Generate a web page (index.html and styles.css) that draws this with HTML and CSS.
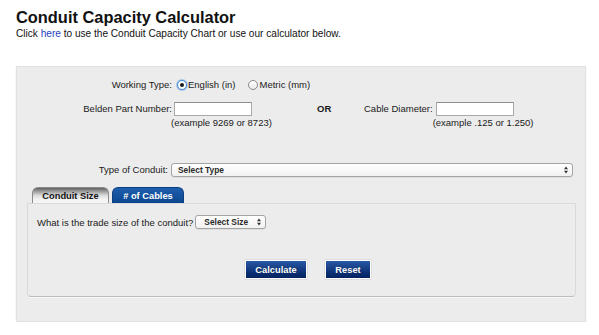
FILE: index.html
```html
<!DOCTYPE html>
<html lang="en">
<head>
<meta charset="utf-8">
<title>Conduit Capacity Calculator</title>
<link rel="stylesheet" href="styles.css">
</head>
<body>
<h1 class="title">Conduit Capacity Calculator</h1>
<p class="intro">Click <a href="#" class="link">here</a> to use the Conduit Capacity Chart or use our calculator below.</p>
<div class="panel">
  <div class="row row-type">
    <span class="lbl">Working Type:</span>
    <label class="radio-opt"><input type="radio" name="wt" class="radio" checked>English (in)</label>
    <label class="radio-opt radio-opt-2"><input type="radio" name="wt" class="radio">Metric (mm)</label>
  </div>
  <div class="row row-parts">
    <span class="lbl">Belden Part Number:</span>
    <div class="field">
      <input type="text" class="text-in">
      <span class="example">(example 9269 or 8723)</span>
    </div>
    <span class="or">OR</span>
    <span class="lbl2">Cable Diameter:</span>
    <div class="field field-2">
      <input type="text" class="text-in">
      <span class="example">(example .125 or 1.250)</span>
    </div>
  </div>
  <div class="row row-conduit">
    <span class="lbl lbl-conduit">Type of Conduit:</span>
    <div class="select select-wide"><span class="select-text">Select Type</span><svg class="arrows" width="4" height="8" viewBox="0 0 4 8"><path d="M0 3.3 L2 0.5 L4 3.3 Z M0 4.7 L2 7.5 L4 4.7 Z" fill="#333"/></svg></div>
  </div>
  <div class="tabs-wrap">
    <div class="tabs">
      <div class="tab tab-active">Conduit Size</div>
      <div class="tab tab-blue"># of Cables</div>
    </div>
    <div class="tab-panel">
      <div class="trade-row">
        <span class="trade-text">What is the trade size of the conduit?</span>
        <div class="select select-size"><span class="select-text">Select Size</span><svg class="arrows" width="4" height="8" viewBox="0 0 4 8"><path d="M0 3.3 L2 0.5 L4 3.3 Z M0 4.7 L2 7.5 L4 4.7 Z" fill="#333"/></svg></div>
      </div>
      <div class="buttons">
        <button class="btn btn-calc" type="button">Calculate</button>
        <button class="btn btn-reset" type="button">Reset</button>
      </div>
    </div>
  </div>
</div>
</body>
</html>
```
FILE: styles.css
```css
* { box-sizing: border-box; }
body {
  margin: 0;
  background: #fff;
  font-family: "Liberation Sans", Arial, sans-serif;
  color: #1a1a1a;
  font-size: 9.5px;
}
.title {
  margin: 8px 0 0 16px;
  font-size: 16.4px;
  line-height: 19px;
  font-weight: bold;
  color: #111;
}
.intro {
  margin: 1px 0 0 16px;
  font-size: 10.1px;
  line-height: 12px;
  color: #111;
}
.link { color: #1d3fc0; text-decoration: none; }

.panel {
  margin: 26px 0 0 16px;
  width: 570px;
  height: 256px;
  background: #ececec;
  border: 1px solid #e1e1e1;
  box-shadow: 0 1px 1px rgba(0,0,0,0.14);
  padding-top: 11px;
}
.row { display: flex; }
.lbl {
  width: 155px;
  text-align: right;
  line-height: 14px;
  flex: none;
}
.row-type { height: 14px; align-items: center; }
.radio-opt {
  display: flex;
  align-items: center;
  line-height: 14px;
}
.radio {
  appearance: none;
  -webkit-appearance: none;
  margin: 0 1px 0 5px;
  width: 10px;
  height: 10px;
  border-radius: 50%;
  border: 1px solid #8a8a8a;
  background: linear-gradient(#fff, #e9e9e9);
  display: grid;
  place-items: center;
}
.radio:checked {
  border-color: #3f86d6;
  box-shadow: 0 0 0 1px rgba(90,150,220,0.45);
  background: #fff;
}
.radio:checked::after {
  content: "";
  width: 4px;
  height: 4px;
  border-radius: 50%;
  background: #1a1a1a;
}
.radio-opt-2 .radio { margin-left: 12px; margin-right: 2px; }

.row-parts { margin-top: 10px; align-items: flex-start; }
.field {
  width: 143px;
  margin-left: 2px;
  display: flex;
  flex-direction: column;
  flex: none;
}
.field-2 { margin-left: 3px; width: 120px; }
.text-in {
  width: 78px;
  height: 14px;
  margin: 0;
  padding: 0;
  border: 1px solid #a9a9a9;
  border-top-color: #8f8f8f;
  background: #fff;
}
.example {
  margin: 1px 0 0 -3px;
  line-height: 12px;
  white-space: nowrap;
}
.or {
  width: 47px;
  font-weight: bold;
  line-height: 14px;
  flex: none;
}
.lbl2 { line-height: 14px; white-space: nowrap; }

.row-conduit { margin-top: 34px; align-items: center; }
.lbl-conduit { width: 151px; }
.select {
  height: 14px;
  margin-left: 3px;
  border: 1px solid #a4a4a4;
  border-radius: 3px;
  background: linear-gradient(#ffffff, #f1f1f1);
  box-shadow: 0 1px 0 rgba(0,0,0,0.06);
  display: flex;
  align-items: center;
  justify-content: space-between;
  padding: 0 4px 0 6px;
}
.select-text {
  font-weight: bold;
  font-size: 8.4px;
  color: #2a2a2a;
}
.select-wide { width: 402px; }
.arrows { display: block; }

.tabs-wrap { margin: 10px 9px 0 10px; }
.tabs {
  display: flex;
  gap: 3px;
  padding-left: 5px;
}
.tab {
  height: 16px;
  line-height: 16px;
  font-weight: bold;
  font-size: 9.3px;
  text-align: center;
  border-radius: 6px 6px 0 0;
}
.tab-active {
  width: 77px;
  color: #111;
  background: linear-gradient(#5e5e5e 0%, #9b9b9b 22%, #dcdcdc 50%, #f3f3f3 75%, #f5f5f5 100%);
  border: 1px solid #8c8c8c;
  border-bottom: none;
}
.tab-blue {
  width: 72px;
  color: #fff;
  background: linear-gradient(#1d5eae, #0c468f);
  border: 1px solid #0b3f80;
  border-bottom: none;
}
.tab-panel {
  height: 94px;
  border: 1px solid #dadada;
  border-bottom-color: #bdbdbd;
  border-radius: 0 0 4px 4px;
  box-shadow: 0 1px 0 #f8f8f8;
  padding: 11px 0 0 9px;
}
.trade-row { display: flex; align-items: center; height: 14px; }
.trade-text { white-space: nowrap; }
.select-size { width: 71px; margin-left: 2px; padding-left: 8px; }

.buttons {
  margin-top: 31px;
  display: flex;
  justify-content: center;
  gap: 18px;
  padding-left: 4px;
}
.btn {
  height: 19px;
  margin: 0;
  padding: 0;
  border: 1px solid #fff;
  box-shadow: 0 0 1px rgba(0,0,0,0.35);
  background: linear-gradient(#2958a3, #0b2f73 70%, #05235f);
  color: #fff;
  font-family: "Liberation Sans", Arial, sans-serif;
  font-weight: bold;
  font-size: 9.3px;
  text-shadow: 0 0 1px rgba(0,0,0,0.4);
}
.btn-calc { width: 62px; }
.btn-reset { width: 46px; }
```
